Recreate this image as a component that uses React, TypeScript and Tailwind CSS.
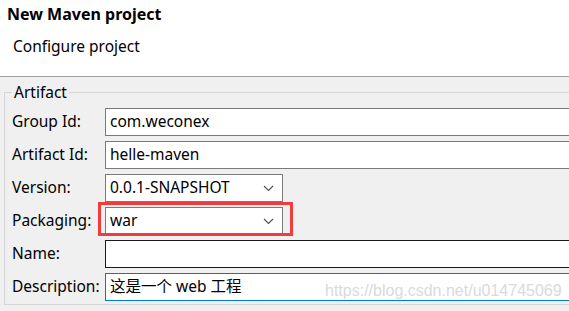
import React from "react";

const font = { fontFamily: '"Noto Sans", "Noto Sans CJK SC", sans-serif' };

const Chevron = () => (
  <svg width="11" height="7" viewBox="0 0 11 7" className="shrink-0">
    <path d="M1 1 L5.5 5.5 L10 1" fill="none" stroke="#505050" strokeWidth="1.1" />
  </svg>
);

const Row: React.FC<{ label: string; children: React.ReactNode }> = ({ label, children }) => (
  <div className="flex items-center h-[28px]">
    <div className="w-[93px] shrink-0 text-[15.5px] text-[#000] whitespace-nowrap">{label}</div>
    {children}
  </div>
);

const TextBox: React.FC<{ value: string; border?: string }> = ({ value, border = "border-[#7a7a7a]" }) => (
  <div className={`flex-1 h-[28px] border bg-white pl-[4px] flex items-center text-[15.5px] text-black whitespace-nowrap mr-[-10px] ${border}`}>
    {value}
  </div>
);

const Select: React.FC<{ value: string }> = ({ value }) => (
  <div className="w-[178px] h-[28px] border border-[#7a7a7a] bg-white pl-[4px] pr-[8px] flex items-center justify-between text-[15.5px] text-black">
    <span>{value}</span>
    <Chevron />
  </div>
);

export default function App() {
  return (
    <div className="w-[569px] h-[311px] overflow-hidden bg-[#f0f0f0] relative" style={font}>
      <div className="h-[77px] bg-white border-b border-[#a0a0a0] pl-[7px] pt-[3px]">
        <div className="text-[16px] font-bold text-black leading-[22px]">New Maven project</div>
        <div className="text-[15.5px] text-black pl-[6px] mt-[10px] leading-[22px]">Configure project</div>
      </div>
      <fieldset className="ml-[4px] mr-[-10px] mt-[6px] border border-[#d5d5d5] pl-[7px] pr-0 pb-[4px] pt-0 h-[222px]">
        <legend className="text-[15.5px] text-black px-[2px] leading-[18px]">Artifact</legend>
        <div className="flex flex-col gap-[5px] mt-[7px]">
          <Row label="Group Id:">
            <TextBox value="com.weconex" />
          </Row>
          <Row label="Artifact Id:">
            <TextBox value="helle-maven" />
          </Row>
          <Row label="Version:">
            <Select value="0.0.1-SNAPSHOT" />
          </Row>
          <Row label="Packaging:">
            <div className="relative">
              <Select value="war" />
              <div className="absolute left-[-7px] top-[-5px] w-[195px] h-[34px] border-[3px] border-[#f03c3c]" />
            </div>
          </Row>
          <Row label="Name:">
            <TextBox value="" border="border-[#1a1a1a]" />
          </Row>
          <Row label="Description:">
            <TextBox value="这是一个 web 工程" border="border-[#0078d7]" />
          </Row>
        </div>
      </fieldset>
      <div
        className="absolute left-[325px] top-[281px] text-[16px] leading-[20px] text-[#dadada] whitespace-nowrap"
        style={{ fontFamily: '"Liberation Sans", sans-serif', textShadow: "0 0 1px #fff" }}
      >
        https://blog.csdn.net/u014745069
      </div>
    </div>
  );
}
